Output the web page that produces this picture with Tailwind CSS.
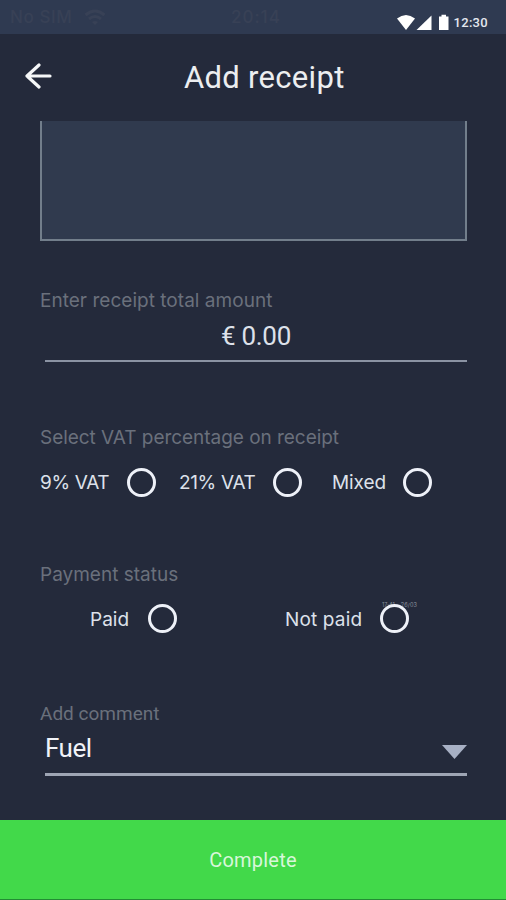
<!DOCTYPE html>
<html lang="en">
<head>
<meta charset="utf-8">
<title>Add receipt</title>
<script src="https://cdn.jsdelivr.net/npm/@tailwindcss/browser@4"></script>
</head>
<body class="bg-[#242a3b]">
<div class="w-[506px] h-[900px] flex flex-col overflow-hidden bg-[#242a3b] font-['Roboto',sans-serif] whitespace-nowrap">
  <div class="relative h-[34px] shrink-0 bg-[#2f3a51] flex items-start">
    <div class="w-full flex items-center pt-[6px] pl-[10px] text-[17px] leading-[22px] font-medium font-['Inter',sans-serif] text-[#384156]">
      <span class="w-[64px] tracking-[0.6px]">No SIM</span>
      <svg class="ml-[10px] w-[22px] h-[17px]" viewBox="0 0 22 17" fill="none" stroke="#384156" stroke-width="3"><path d="M1.5 6Q11-2 20.500 6M5 10Q11 5 17 10"/><path d="M8 13L11 16L14 13Q11 11 8 13Z" fill="#384156" stroke="none"/></svg>
      <span class="ml-[125px] tracking-[1px]">20:14</span>
    </div>
    <div class="absolute right-[18px] top-[14px] flex items-center text-white">
      <svg class="w-[53px] h-[17px]" viewBox="0 0 53 17" fill="#fff"><path d="M0 4.500Q9-2.500 18 4.500L9 16Z"/><path d="M34.500 1.500V16H19.500Z"/><path d="M42 2.500H44.500V.8H49V2.500H51.500V16H42Z"/></svg>
      <span class="ml-[4px] text-[13px] leading-[17px] font-medium tracking-[0.3px] text-[#e4e8ef]">12:30</span>
    </div>
  </div>
  <header class="h-[87px] shrink-0 flex items-center">
    <svg class="mb-[3px] ml-[25px] w-[27px] h-[26px]" viewBox="0 0 27 26" fill="none" stroke="#f5f7f8" stroke-width="3.200" stroke-linecap="round" stroke-linejoin="round"><path d="M25 13H2M14 2L2 13L14 24"/></svg>
    <h1 class="ml-[132px] text-[31px] leading-[40px] tracking-[0.3px] text-[#eceef0]">Add receipt</h1>
  </header>
  <main class="flex-1 pl-[40px] pr-[39px] text-[#dde1ea]">
    <div class="h-[120px] border-2 border-t-0 border-[#727e8b] bg-[#303a4e]"></div>
    <section class="mt-[47px]">
      <p class="h-[26px] leading-[26px] text-[19px] tracking-[0.03px] font-['Inter',sans-serif] text-[#6a707c]">Enter receipt total amount</p>
      <div class="ml-[5px] h-[48px] border-b-2 border-[#8b93a3] flex justify-center"><span class="pt-[3px] text-[26px] leading-[38px] tracking-[-0.3px]">€ 0.00</span></div>
    </section>
    <section class="mt-[63px]">
      <p class="h-[26px] leading-[26px] text-[19px] tracking-[-0.04px] font-['Inter',sans-serif] text-[#6a707c]">Select VAT percentage on receipt</p>
      <div class="mt-[16px] flex items-center h-[30px] text-[19px] font-['Inter',sans-serif]">
        <span class="w-[87px] pt-[3px] tracking-[-0.35px]">9% VAT</span><i class="size-[29px] rounded-full border-3 border-[#eef1f8]"></i>
        <span class="ml-[23px] w-[94px] pt-[3px] tracking-[-0.35px]">21% VAT</span><i class="size-[29px] rounded-full border-3 border-[#eef1f8]"></i>
        <span class="ml-[30px] w-[71px] pt-[3px] tracking-[-0.1px]">Mixed</span><i class="size-[29px] rounded-full border-3 border-[#eef1f8]"></i>
      </div>
    </section>
    <section class="mt-[65px]">
      <p class="h-[26px] leading-[26px] text-[19px] font-['Inter',sans-serif] text-[#6a707c]">Payment status</p>
      <div class="mt-[15px] pl-[50px] flex items-center h-[30px] text-[19px] font-['Inter',sans-serif]">
        <span class="w-[58px] pt-[4px]">Paid</span><i class="size-[29px] rounded-full border-3 border-[#eef1f8]"></i>
        <span class="ml-[108px] w-[95px] pt-[4px] tracking-[0.15px]">Not paid</span>
        <span class="relative size-[29px]"><span class="absolute left-[2px] -top-[2px] text-[5.500px] leading-[6px] tracking-[0.1px] text-[#8b929e]">17:41 - 26/03</span><i class="relative block size-[29px] rounded-full border-3 border-[#eef1f8]"></i></span>
      </div>
    </section>
    <section class="mt-[68px]">
      <p class="h-[26px] leading-[26px] text-[19px] text-[#6a707c]">Add comment</p>
      <div class="ml-[5px] h-[49px] border-b-[3px] border-[#9ea5b4] flex justify-between items-start">
        <span class="pt-[3px] text-[26px] leading-[36px] tracking-[-0.5px] text-[#f1f3f8]">Fuel</span>
        <svg class="mt-[18px] w-[25px] h-[14px]" viewBox="0 0 26 14" preserveAspectRatio="none" fill="#a7b0c4"><path d="M0 0H26L13 14Z"/></svg>
      </div>
    </section>
  </main>
  <button class="h-[80px] shrink-0 bg-[#42d94a] border-b border-[#238c34] text-[20px] tracking-[0.2px] text-[#d8f7da]">Complete</button>
</div>
</body>
</html>
